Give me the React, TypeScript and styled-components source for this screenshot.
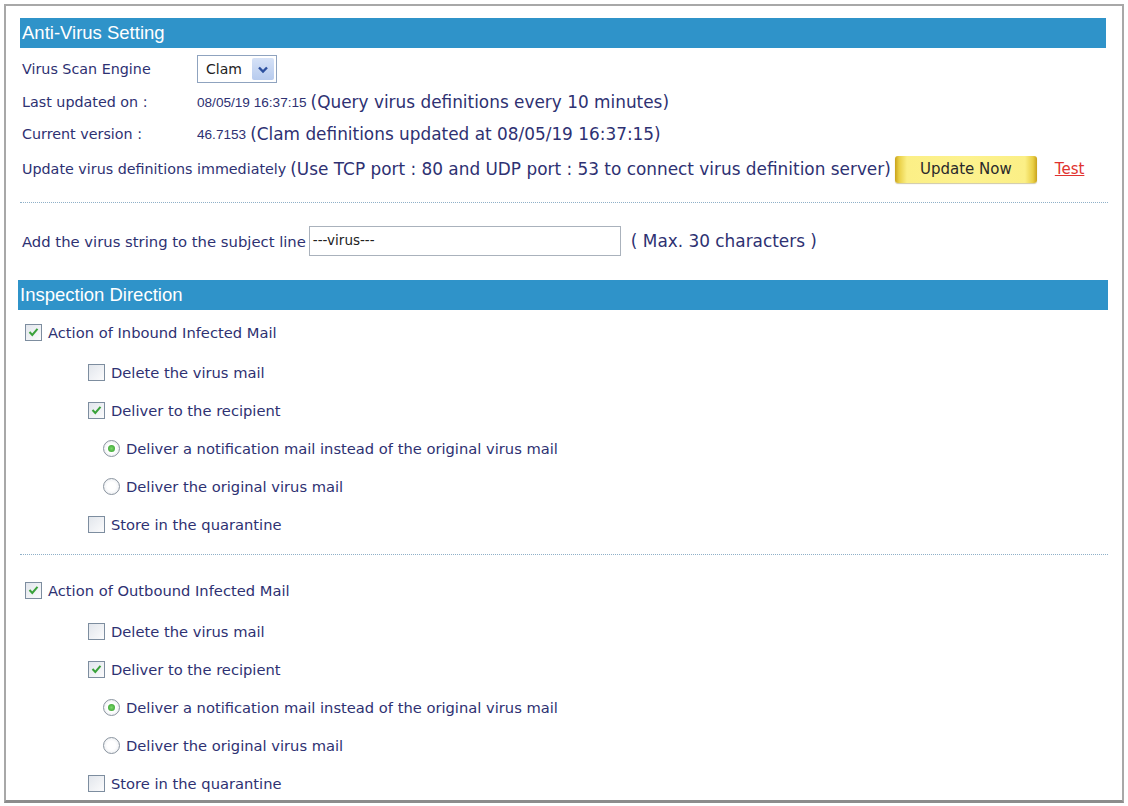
import React from 'react';
import styled, { createGlobalStyle } from 'styled-components';

const Global = createGlobalStyle`
  body {
    margin: 0;
    background: #ffffff;
    font-family: "DejaVu Sans", Verdana, sans-serif;
  }
`;

const Frame = styled.div`
  box-sizing: border-box;
  margin: 4px 0 0 4px;
  width: 1120px;
  height: 799px;
  border: 2px solid #a8a8a8;
  border-bottom: 3px solid #8c8c8c;
  padding: 12px 16px 0 14px;
  overflow: hidden;
  color: #2e3172;
`;

const Header = styled.div<{ wide?: boolean }>`
  height: 30px;
  line-height: 30px;
  background: #2f93c9;
  color: #ffffff;
  font-family: "Liberation Sans", Arial, sans-serif;
  font-size: 18.5px;
  padding-left: 2px;
  margin-right: ${(p) => (p.wide ? '-2px' : '0')};
  margin-left: ${(p) => (p.wide ? '-2px' : '0')};
`;

const Row = styled.div<{ h: number; top?: number; size?: number }>`
  display: flex;
  align-items: center;
  height: ${(p) => p.h}px;
  margin-top: ${(p) => p.top ?? 0}px;
  padding-left: 2px;
  font-size: ${(p) => p.size ?? 14.3}px;
  white-space: nowrap;
`;

const Label = styled.span`
  width: 175px;
  flex: none;
`;

const Value = styled.span`
  font-family: "Liberation Sans", Arial, sans-serif;
  font-size: 13.6px;
`;

const Big = styled.span<{ gap?: number }>`
  font-size: 16.9px;
  margin-left: ${(p) => p.gap ?? 4}px;
`;

const Select = styled.div`
  display: flex;
  align-items: center;
  box-sizing: border-box;
  width: 80px;
  height: 28px;
  border: 1px solid #8fa3bf;
  background: #fff;
  color: #222;
  font-size: 14px;
`;

const SelectText = styled.span`
  flex: 1;
  padding-left: 8px;
`;

const SelectArrow = styled.span`
  display: flex;
  align-items: center;
  justify-content: center;
  width: 22px;
  height: 22px;
  margin-right: 2px;
  background: linear-gradient(#d6e2f7, #b7cbee);
  border-radius: 2px;
`;

const Divider = styled.div<{ top: number }>`
  border-top: 1px dotted #8fb0c8;
  margin: ${(p) => p.top}px -2px 0 0;
`;

const TextInput = styled.div`
  box-sizing: border-box;
  width: 312px;
  height: 30px;
  border: 1px solid #aab2bc;
  margin-left: 3px;
  padding: 5px 0 0 3px;
  font-size: 13.5px;
  color: #222;
`;

const UpdateButton = styled.div`
  display: flex;
  align-items: center;
  justify-content: center;
  width: 142px;
  height: 27px;
  margin-left: 4px;
  border-radius: 3px;
  color: #2a2a2a;
  font-size: 15px;
  background: linear-gradient(
    90deg,
    #c9a21c 0,
    #e9cf45 4px,
    #fbef86 12px,
    #fdf28e 50%,
    #fbef86 calc(100% - 12px),
    #e9cf45 calc(100% - 4px),
    #c9a21c 100%
  );
  box-shadow: 0 1px 1px rgba(120, 100, 0, 0.35);
`;

const TestLink = styled.span`
  margin-left: 18px;
  color: #e0332f;
  text-decoration: underline;
  font-size: 15px;
`;

const Option = styled.div<{ indent: number; gap?: number }>`
  display: flex;
  align-items: center;
  height: 38px;
  margin-top: ${(p) => p.gap ?? 0}px;
  padding-left: ${(p) => p.indent}px;
  font-size: 14.7px;
  white-space: nowrap;
`;

const Box = styled.span`
  box-sizing: border-box;
  display: inline-flex;
  align-items: center;
  justify-content: center;
  width: 17px;
  height: 17px;
  margin-right: 6px;
  border: 1px solid #7d8d9f;
  background: linear-gradient(135deg, #e2e6ec, #fbfbfc);
`;

const Radio = styled.span<{ checked?: boolean }>`
  box-sizing: border-box;
  display: inline-flex;
  align-items: center;
  justify-content: center;
  width: 17px;
  height: 17px;
  margin-right: 6px;
  border-radius: 50%;
  border: 1px solid #8a949f;
  background: radial-gradient(circle, #ffffff 40%, #e2e5ea 100%);
  &::after {
    content: '';
    display: ${(p) => (p.checked ? 'block' : 'none')};
    width: 7px;
    height: 7px;
    border-radius: 50%;
    background: radial-gradient(circle, #7bd86a, #2f9a2a);
  }
`;

const Check = () => (
  <svg width="11" height="10" viewBox="0 0 11 10">
    <path d="M1.5 5 L4.3 8 L9.5 1.8" fill="none" stroke="#3aa23a" strokeWidth="2" />
  </svg>
);

function CheckItem({ label, checked, indent, gap }: { label: string; checked?: boolean; indent: number; gap?: number }) {
  return (
    <Option indent={indent} gap={gap}>
      <Box>{checked && <Check />}</Box>
      {label}
    </Option>
  );
}

function RadioItem({ label, checked }: { label: string; checked?: boolean }) {
  return (
    <Option indent={83}>
      <Radio checked={checked} />
      {label}
    </Option>
  );
}

function Direction({ title, first }: { title: string; first?: boolean }) {
  return (
    <>
      <CheckItem label={title} checked indent={5} gap={first ? 3 : 16} />
      <CheckItem label="Delete the virus mail" indent={68} gap={first ? 2 : 3} />
      <CheckItem label="Deliver to the recipient" checked indent={68} />
      <RadioItem label="Deliver a notification mail instead of the original virus mail" checked />
      <RadioItem label="Deliver the original virus mail" />
      <CheckItem label="Store in the quarantine" indent={68} />
    </>
  );
}

export default function App() {
  return (
    <>
      <Global />
      <Frame>
        <Header>Anti-Virus Setting</Header>
        <Row h={34} top={4}>
          <Label>Virus Scan Engine</Label>
          <Select>
            <SelectText>Clam</SelectText>
            <SelectArrow>
              <svg width="12" height="9" viewBox="0 0 12 9">
                <path d="M2 2.5 L6 6.5 L10 2.5" fill="none" stroke="#2b4f9e" strokeWidth="2.4" />
              </svg>
            </SelectArrow>
          </Select>
        </Row>
        <Row h={32}>
          <Label>Last updated on :</Label>
          <Value>08/05/19 16:37:15</Value>
          <Big>(Query virus definitions every 10 minutes)</Big>
        </Row>
        <Row h={32}>
          <Label>Current version :</Label>
          <Value>46.7153</Value>
          <Big>(Clam definitions updated at 08/05/19 16:37:15)</Big>
        </Row>
        <Row h={38}>
          Update virus definitions immediately
          <Big>(Use TCP port : 80 and UDP port : 53 to connect virus definition server)</Big>
          <UpdateButton>Update Now</UpdateButton>
          <TestLink>Test</TestLink>
        </Row>
        <Divider top={14} />
        <Row h={48} top={14} size={14.8}>
          Add the virus string to the subject line
          <TextInput>---virus---</TextInput>
          <Big gap={10}>( Max. 30 characters )</Big>
        </Row>
        <Header wide style={{ marginTop: 15 }}>Inspection Direction</Header>
        <Direction title="Action of Inbound Infected Mail" first />
        <Divider top={11} />
        <Direction title="Action of Outbound Infected Mail" />
      </Frame>
    </>
  );
}
